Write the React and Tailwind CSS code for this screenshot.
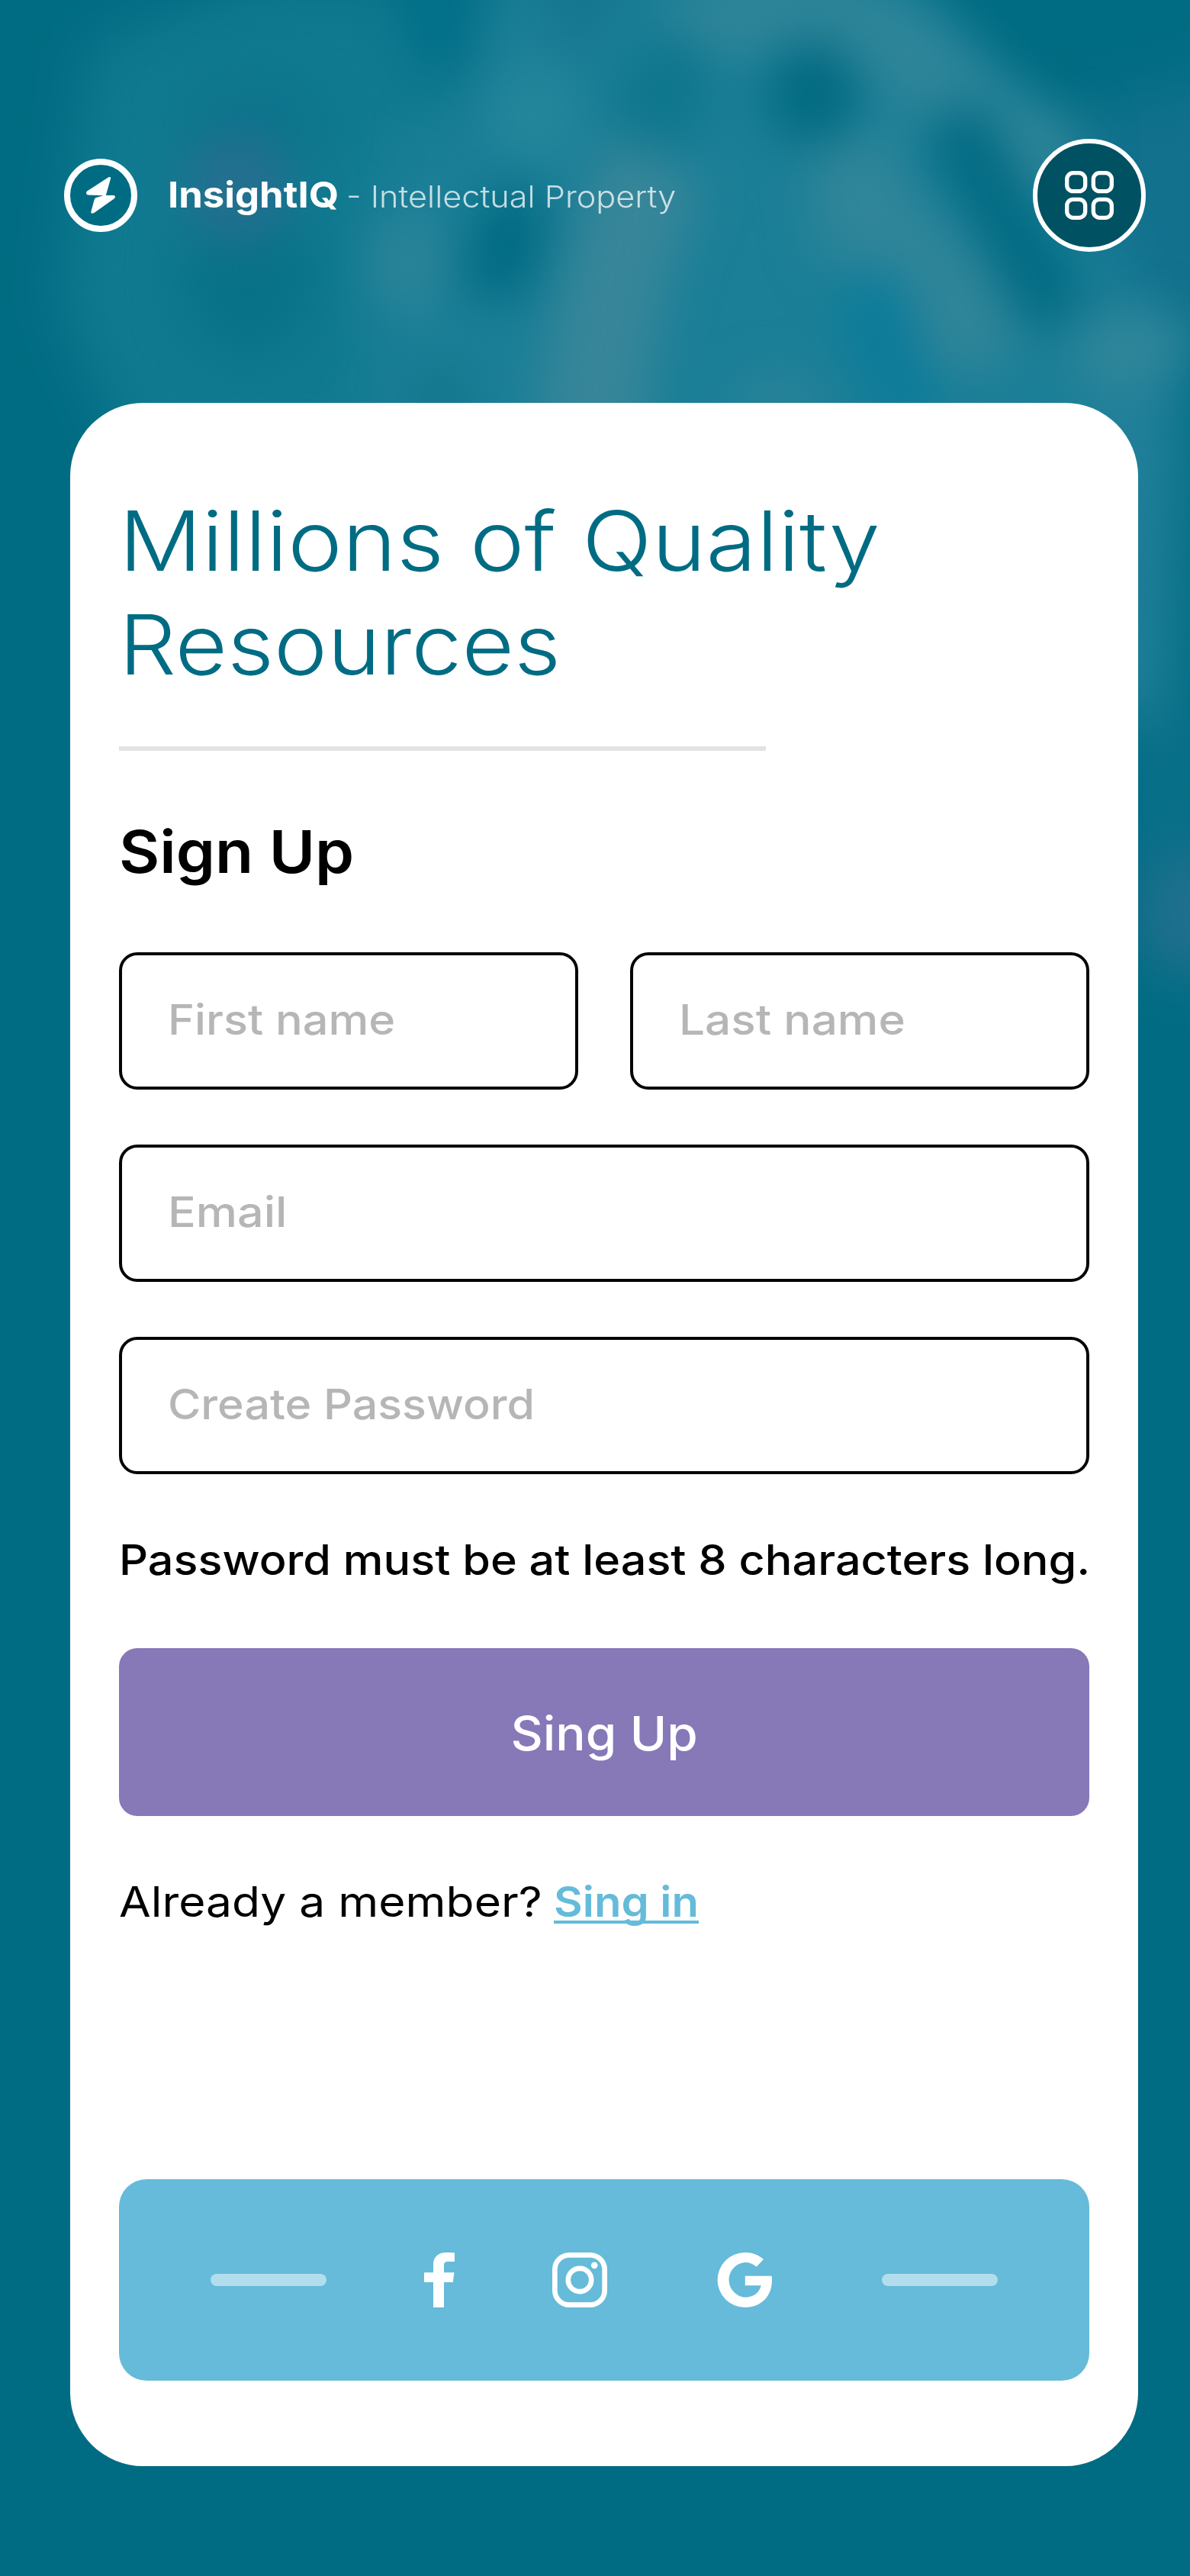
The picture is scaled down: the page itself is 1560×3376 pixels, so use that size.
import React from "react";

function Backdrop() {
  return (
    <svg className="absolute inset-x-0 top-0 h-[1560px] w-[1560px]" viewBox="0 0 1560 1560" aria-hidden="true">
      <defs>
        <filter id="soft" x="-50%" y="-50%" width="200%" height="200%" colorInterpolationFilters="sRGB">
          <feGaussianBlur stdDeviation="38" />
        </filter>
        <filter id="softer" x="-50%" y="-50%" width="200%" height="200%" colorInterpolationFilters="sRGB">
          <feGaussianBlur stdDeviation="32" />
        </filter>
      </defs>
      <g filter="url(#soft)">
        <path d="M120 60 L340 -20 L540 -20 L620 200 L640 600 L170 600 L80 400 Z" fill="#107a90" />
        <path d="M620 -40 L1180 -40 L1330 120 L1470 330 L1560 430 L1540 620 L480 620 L500 200 L600 150 Z" fill="#1b7f97" />
        <path d="M1400 150 L1640 90 L1640 420 L1500 420 Z" fill="#12718d" />
        <path d="M1440 500 L1555 480 L1530 940 L1440 940 Z" fill="#22809a" />
        <path d="M1480 940 H1580 V1130 H1480 Z" fill="#0a7089" />
        <circle cx="1565" cy="1200" r="80" fill="#21708f" />
      </g>
      <g filter="url(#softer)">
        <path d="M880 40 Q1110 -20 1200 80 T1410 220" fill="none" stroke="#2f8599" strokeWidth="105" />
        <path d="M870 210 Q800 300 770 600" fill="none" stroke="#388699" strokeWidth="135" />
        <path d="M1120 180 L1130 290 Q1230 330 1290 480" fill="none" stroke="#308599" strokeWidth="125" />
        <path d="M1420 480 Q1500 440 1530 480" fill="none" stroke="#31869a" strokeWidth="100" />
        <ellipse cx="535" cy="345" rx="52" ry="65" fill="#2b8498" />
        <ellipse cx="700" cy="150" rx="55" ry="65" fill="#25879b" />
        <ellipse cx="1020" cy="535" rx="60" ry="45" fill="#2a8399" />
        <ellipse cx="575" cy="20" rx="40" ry="75" fill="#02708a" />
        <ellipse cx="760" cy="15" rx="35" ry="45" fill="#15738d" />
        <ellipse cx="325" cy="360" rx="90" ry="110" fill="#087288" />
        <ellipse cx="330" cy="165" rx="90" ry="60" fill="#0b738b" />
        <circle cx="310" cy="245" r="70" fill="#266f90" />
        <ellipse cx="870" cy="120" rx="60" ry="80" fill="#0e768d" transform="rotate(25 870 120)" />
        <ellipse cx="1065" cy="122" rx="58" ry="68" fill="#006980" />
        <path d="M1245 150 Q1320 290 1390 420" fill="none" stroke="#006a82" strokeWidth="86" />
        <path d="M700 265 Q650 310 650 390" fill="none" stroke="#006a82" strokeWidth="90" />
        <ellipse cx="1155" cy="430" rx="46" ry="80" fill="#0a7b9a" transform="rotate(-12 1155 430)" />
        <ellipse cx="1190" cy="510" rx="45" ry="45" fill="#0a7b9a" />
        <ellipse cx="575" cy="520" rx="38" ry="40" fill="#107489" />
      </g>
    </svg>
  );
}

function Logo() {
  return (
    <svg className="size-24 shrink-0" viewBox="0 0 96 96" aria-hidden="true">
      <circle cx="48" cy="48" r="44" fill="#006c83" stroke="#fff" strokeWidth="8" />
      <path
        d="M58.3 24.3 Q61.6 23 61 26.3 L54.8 48 H65.5 Q68.4 49.5 65.8 52.3 L39.3 71.1 Q34.8 73 35.4 69.3 L39.6 53.7 Q40.2 51.5 42 51 L51.5 48.2 L31 47.6 Q27.8 46 29.8 42.8 Z"
        fill="#fff"
      />
    </svg>
  );
}

function GridIcon() {
  return (
    <svg className="size-16" viewBox="0 0 64 64" fill="none" stroke="#fff" strokeWidth="5.33" aria-hidden="true">
      <rect x="2.67" y="2.67" width="24" height="24" rx="8" />
      <rect x="37.33" y="2.67" width="24" height="24" rx="8" />
      <rect x="2.67" y="37.33" width="24" height="24" rx="8" />
      <rect x="37.33" y="37.33" width="24" height="24" rx="8" />
    </svg>
  );
}

function Field({ type = "text", placeholder, stretch }) {
  return (
    <label className="flex h-[180px] min-w-0 flex-1 items-center rounded-3xl border-4 border-[#050505] bg-white pb-1 pl-[60px]">
      <input
        type={type}
        placeholder={placeholder}
        className={`h-20 w-4/5 origin-left bg-transparent text-[55px] font-medium outline-none placeholder:text-[#b6b6b6] placeholder:opacity-100 ${stretch}`}
      />
    </label>
  );
}

export default function App() {
  return (
    <div className="relative flex h-[3376px] w-[1560px] flex-col overflow-hidden bg-[#006c83] font-['Inter',sans-serif]">
      <Backdrop />

      <header className="relative mt-[182px] flex h-[148px] items-center pr-[58px] pl-[84px]">
        <Logo />
        <div className="ml-10 flex items-baseline leading-[60px] whitespace-nowrap">
          <span className="origin-left scale-x-[1.08] text-[47px] font-bold text-white">InsightIQ</span>
          <span className="ml-[26px] origin-left scale-x-[1.094] text-[39.5px] font-light text-white/75">
            - Intellectual Property
          </span>
        </div>
        <button
          aria-label="Menu"
          className="ml-auto flex size-[148px] items-center justify-center rounded-full border-[6px] border-white bg-[#005162]"
        >
          <GridIcon />
        </button>
      </header>

      <main className="relative mt-[198px] ml-[92px] flex h-[2704px] w-[1400px] flex-col rounded-[96px] bg-white px-16 pt-[113px] pb-28">
        <h1 className="text-[108px] leading-[136px] font-light whitespace-nowrap text-[#006c83]">
          <span className="block origin-left scale-x-[1.117]">Millions of Quality</span>
          <span className="block origin-left scale-x-[1.095]">Resources</span>
        </h1>
        <div className="mt-[65px] h-1.5 w-[848px] shrink-0 bg-[#e3e3e3]" />

        <h2 className="mt-[72px] w-fit origin-left scale-x-[1.064] text-[77px] leading-[120px] font-semibold text-black">
          Sign Up
        </h2>

        <form className="mt-[72px] flex flex-col">
          <div className="flex flex-col gap-[72px]">
            <div className="flex gap-[68px]">
              <Field placeholder="First name" stretch="scale-x-[1.08]" />
              <Field placeholder="Last name" stretch="scale-x-[1.096]" />
            </div>
            <div className="flex">
              <Field type="email" placeholder="Email" stretch="scale-x-[1.11]" />
            </div>
            <div className="flex">
              <Field type="password" placeholder="Create Password" stretch="scale-x-[1.075]" />
            </div>
          </div>
          <p className="mt-[70px] w-fit origin-left scale-x-[1.079] text-[55px] leading-[84px] font-medium whitespace-nowrap text-black">
            Password must be at least 8 characters long.
          </p>
          <button
            type="button"
            className="mt-[74px] flex h-[220px] items-center justify-center rounded-3xl bg-[#8778b8] pt-[3px] text-[62px] font-medium text-white"
          >
            <span className="scale-x-[1.057]">Sing Up</span>
          </button>
        </form>

        <p className="mt-[70px] flex text-[55px] leading-[84px] whitespace-nowrap text-black">
          <span className="origin-left scale-x-[1.1]">Already a member?</span>
          <a
            href="#"
            className="ml-[66px] origin-left scale-x-[1.055] font-semibold text-[#65bbd9] underline decoration-[3.5px] underline-offset-[5px] [text-decoration-skip-ink:none]"
          >
            Sing in
          </a>
        </p>

        <div className="mt-auto flex h-[264px] items-center rounded-[36px] bg-[#65bbd9] px-[120px]">
          <span className="h-4 w-[152px] rounded-full bg-white/50" />
          <svg className="ml-32 h-[72px] w-10" viewBox="0 0 40 72" fill="#fff" aria-label="Facebook">
            <path d="M40 0.5 C36 0 32 0 29 0 C18.5 0 12 6 12 15.5 V26.3 H0 V39 H12 V72 H26 V39 H37.8 L39.4 26.3 H26 V16.5 C26 13.5 27.5 11.9 31 11.9 H40 Z" />
          </svg>
          <svg className="ml-32 size-[72px]" viewBox="0 0 72 72" fill="none" stroke="#fff" strokeWidth="6.7" aria-label="Instagram">
            <rect x="3.35" y="3.35" width="65.3" height="65.3" rx="19" />
            <circle cx="36" cy="36" r="15.2" />
            <circle cx="55.2" cy="16.8" r="4.4" fill="#fff" stroke="none" />
          </svg>
          <svg className="ml-36 size-[72px]" viewBox="0 0 72 72" fill="#fff" aria-label="Google">
            <path d="M61 9 L51.7 18.7 C47.5 14.7 42 12.9 37 12.9 A23 23 0 0 0 37 58.8 C48 58.8 55.5 52.5 57.7 43.3 H36.8 V30.7 H71.6 C71.9 32.5 72 34 72 36.5 C72 57.5 57.5 72 36.6 72 A36 36 0 0 1 36.6 0 C46 0 54.5 3.2 61 9 Z" />
          </svg>
          <span className="ml-auto h-4 w-[152px] rounded-full bg-white/50" />
        </div>
      </main>
    </div>
  );
}
